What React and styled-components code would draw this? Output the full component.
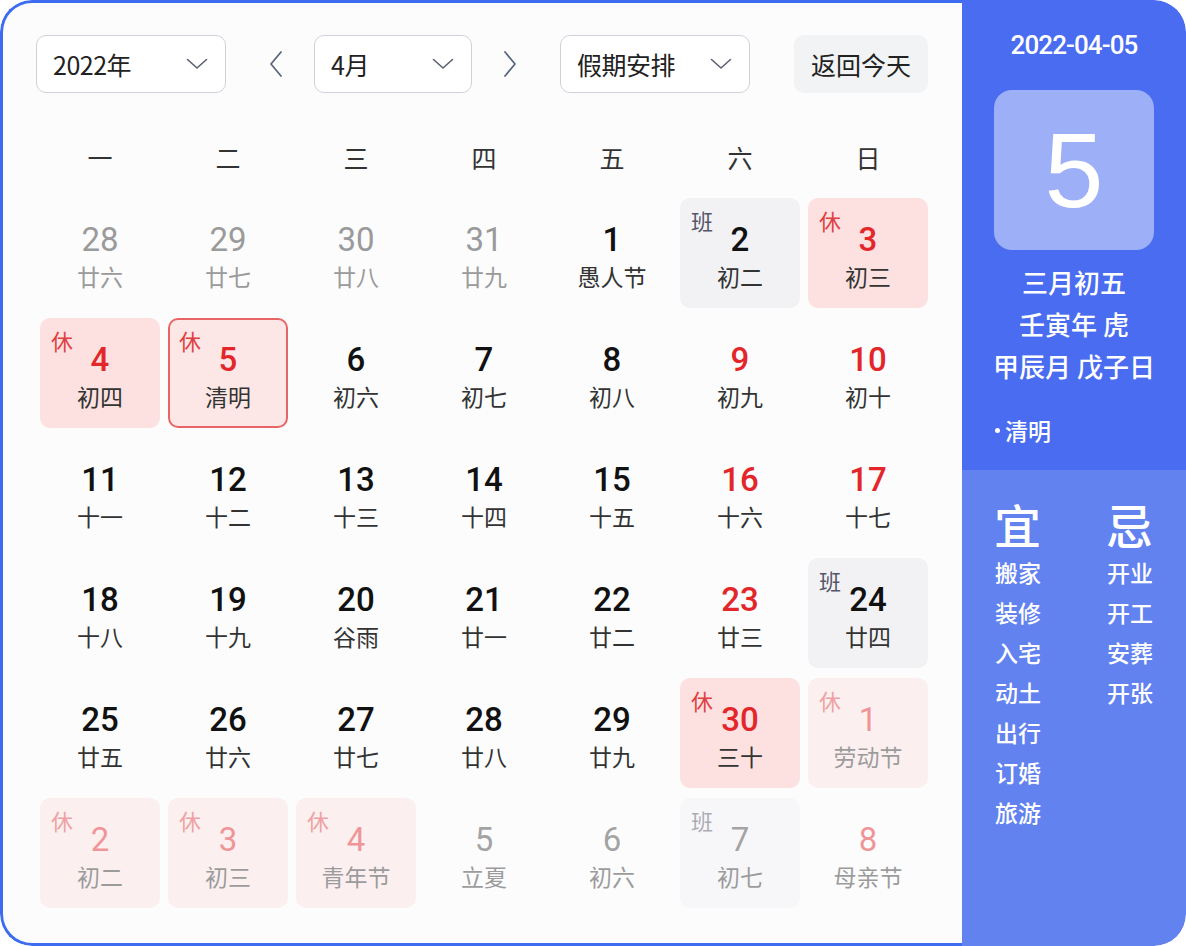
import React from "react";
import styled, { createGlobalStyle, css } from "styled-components";

const GlobalStyle = createGlobalStyle`
  html, body {
    margin: 0;
    padding: 0;
    background: #ffffff;
  }
  body {
    font-family: "Noto Sans CJK SC", "Noto Sans", sans-serif;
  }
`;

const NUM_FONT = `"Roboto", "Liberation Sans", "Noto Sans CJK SC", sans-serif`;

const weekdays = ["一", "二", "三", "四", "五", "六", "日"];

const days = [
  { n: 28, l: "廿六", muted: "prev" },
  { n: 29, l: "廿七", muted: "prev" },
  { n: 30, l: "廿八", muted: "prev" },
  { n: 31, l: "廿九", muted: "prev" },
  { n: 1, l: "愚人节" },
  { n: 2, l: "初二", kind: "work" },
  { n: 3, l: "初三", kind: "rest", red: true },

  { n: 4, l: "初四", kind: "rest", red: true },
  { n: 5, l: "清明", kind: "rest", red: true, selected: true },
  { n: 6, l: "初六" },
  { n: 7, l: "初七" },
  { n: 8, l: "初八" },
  { n: 9, l: "初九", red: true },
  { n: 10, l: "初十", red: true },

  { n: 11, l: "十一" },
  { n: 12, l: "十二" },
  { n: 13, l: "十三" },
  { n: 14, l: "十四" },
  { n: 15, l: "十五" },
  { n: 16, l: "十六", red: true },
  { n: 17, l: "十七", red: true },

  { n: 18, l: "十八" },
  { n: 19, l: "十九" },
  { n: 20, l: "谷雨" },
  { n: 21, l: "廿一" },
  { n: 22, l: "廿二" },
  { n: 23, l: "廿三", red: true },
  { n: 24, l: "廿四", kind: "work" },

  { n: 25, l: "廿五" },
  { n: 26, l: "廿六" },
  { n: 27, l: "廿七" },
  { n: 28, l: "廿八" },
  { n: 29, l: "廿九" },
  { n: 30, l: "三十", kind: "rest", red: true },
  { n: 1, l: "劳动节", kind: "rest", red: true, muted: "next" },

  { n: 2, l: "初二", kind: "rest", red: true, muted: "next" },
  { n: 3, l: "初三", kind: "rest", red: true, muted: "next" },
  { n: 4, l: "青年节", kind: "rest", red: true, muted: "next" },
  { n: 5, l: "立夏", muted: "next" },
  { n: 6, l: "初六", muted: "next" },
  { n: 7, l: "初七", kind: "work", muted: "next" },
  { n: 8, l: "母亲节", red: true, muted: "next" },
];

const goodThings = ["搬家", "装修", "入宅", "动土", "出行", "订婚", "旅游"];
const badThings = ["开业", "开工", "安葬", "开张"];

const Chevron = () => (
  <svg width="22" height="12" viewBox="0 0 22 12" fill="none">
    <path d="M1.5 1.5 L11 10 L20.5 1.5" stroke="#5b6170" strokeWidth="1.6" strokeLinecap="round" strokeLinejoin="round" />
  </svg>
);

const Arrow = ({ dir }) => (
  <svg width="14" height="28" viewBox="0 0 14 28" fill="none">
    <path
      d={dir === "left" ? "M12 2 L2 14 L12 26" : "M2 2 L12 14 L2 26"}
      stroke="#5a6780"
      strokeWidth="1.8"
      strokeLinecap="round"
      strokeLinejoin="round"
    />
  </svg>
);

const App = () => {
  return (
    <>
      <GlobalStyle />
      <Frame>
        <Main>
          <Toolbar>
            <Select $w={190}>
              <span>2022年</span>
              <Chevron />
            </Select>
            <MonthGroup>
              <ArrowBtn>
                <Arrow dir="left" />
              </ArrowBtn>
              <Select $w={158}>
                <span>4月</span>
                <Chevron />
              </Select>
              <ArrowBtn>
                <Arrow dir="right" />
              </ArrowBtn>
            </MonthGroup>
            <Select $w={190}>
              <span>假期安排</span>
              <Chevron />
            </Select>
            <TodayButton>返回今天</TodayButton>
          </Toolbar>

          <WeekRow>
            {weekdays.map((w) => (
              <WeekDay key={w}>{w}</WeekDay>
            ))}
          </WeekRow>

          <Grid>
            {days.map((d, i) => (
              <Cell key={i} $kind={d.kind} $muted={d.muted} $selected={d.selected}>
                {d.kind && (
                  <Badge $kind={d.kind} $selected={d.selected}>
                    {d.kind === "rest" ? "休" : "班"}
                  </Badge>
                )}
                <DayNum $red={d.red} $muted={d.muted}>
                  {d.n}
                </DayNum>
                <Lunar $muted={d.muted}>{d.l}</Lunar>
              </Cell>
            ))}
          </Grid>
        </Main>

        <Side>
          <SideTop>
            <DateLine>2022-04-05</DateLine>
            <BigDay>5</BigDay>
            <LunarInfo>
              <div>三月初五</div>
              <div>壬寅年 虎</div>
              <div>甲辰月 戊子日</div>
            </LunarInfo>
            <Festival>
              <Dot />
              清明
            </Festival>
          </SideTop>
          <SideBottom>
            <Column>
              <Heading>宜</Heading>
              {goodThings.map((t) => (
                <Item key={t}>{t}</Item>
              ))}
            </Column>
            <Column>
              <Heading>忌</Heading>
              {badThings.map((t) => (
                <Item key={t}>{t}</Item>
              ))}
            </Column>
          </SideBottom>
        </Side>
      </Frame>
    </>
  );
};

export default App;

const Frame = styled.div`
  width: 1186px;
  height: 946px;
  display: flex;
  border-radius: 32px;
  overflow: hidden;
  background: #ffffff;
`;

const Main = styled.div`
  flex: 1;
  box-sizing: border-box;
  border: 3px solid #3d6cf0;
  border-right: none;
  border-radius: 32px 0 0 32px;
  background: #fcfcfd;
  padding: 32px 34px 0 37px;
`;

const Toolbar = styled.div`
  display: flex;
  align-items: center;
  margin-left: -4px;
  gap: 43px;
`;

const MonthGroup = styled.div`
  display: flex;
  align-items: center;
  gap: 31px;
`;

const Select = styled.div`
  width: ${(p) => p.$w}px;
  height: 58px;
  box-sizing: border-box;
  border: 1px solid #cfd2da;
  border-radius: 10px;
  background: #ffffff;
  display: flex;
  align-items: center;
  justify-content: space-between;
  padding: 0 17px 0 16px;
  font-size: 25px;
  color: #222;
  span {
    letter-spacing: -0.5px;
  }
`;

const ArrowBtn = styled.div`
  width: 14px;
  height: 28px;
  display: flex;
  align-items: center;
  justify-content: center;
`;

const TodayButton = styled.div`
  margin-left: auto;
  width: 134px;
  height: 58px;
  border-radius: 10px;
  background: #f2f3f5;
  display: flex;
  align-items: center;
  justify-content: center;
  font-size: 25px;
  color: #222;
`;

const WeekRow = styled.div`
  display: grid;
  grid-template-columns: repeat(7, 120px);
  column-gap: 8px;
  margin-top: 44px;
  height: 40px;
`;

const WeekDay = styled.div`
  display: flex;
  align-items: center;
  justify-content: center;
  font-size: 25px;
  color: #333;
`;

const Grid = styled.div`
  display: grid;
  grid-template-columns: repeat(7, 120px);
  grid-auto-rows: 110px;
  column-gap: 8px;
  row-gap: 10px;
  margin-top: 21px;
`;

const Cell = styled.div`
  position: relative;
  box-sizing: border-box;
  border-radius: 10px;
  display: flex;
  flex-direction: column;
  align-items: center;
  padding-top: 22px;
  ${(p) =>
    p.$kind === "rest" &&
    css`
      background: #fde1e1;
    `}
  ${(p) =>
    p.$kind === "work" &&
    css`
      background: #f2f2f5;
    `}
  ${(p) =>
    p.$selected &&
    css`
      background: #fde6e6;
      border: 2px solid #e86565;
      padding-top: 20px;
    `}
  ${(p) =>
    p.$muted === "next" &&
    css`
      opacity: 0.48;
    `}
`;

const Badge = styled.span`
  position: absolute;
  top: ${(p) => (p.$selected ? 6 : 8)}px;
  left: ${(p) => (p.$selected ? 9 : 11)}px;
  font-size: 22px;
  line-height: 28px;
  color: ${(p) => (p.$kind === "rest" ? "#e0403f" : "#55556a")};
`;

const DayNum = styled.div`
  font-family: ${NUM_FONT};
  font-size: 33px;
  line-height: 40px;
  font-weight: ${(p) => (p.$muted ? 400 : 500)};
  color: ${(p) => (p.$red ? "#e3262a" : p.$muted === "prev" ? "#9a9a9a" : p.$muted ? "#444" : "#111")};
`;

const Lunar = styled.div`
  margin-top: 1px;
  font-size: 23px;
  line-height: 30px;
  color: ${(p) => (p.$muted === "prev" ? "#9a9a9a" : "#333")};
`;

const Side = styled.div`
  width: 224px;
  flex-shrink: 0;
  display: flex;
  flex-direction: column;
  color: #ffffff;
  border-radius: 0 32px 32px 0;
  overflow: hidden;
`;

const SideTop = styled.div`
  height: 470px;
  box-sizing: border-box;
  background: #4a6cf0;
  padding: 30px 0 0 31px;
  display: flex;
  flex-direction: column;
`;

const DateLine = styled.div`
  margin-left: -31px;
  text-align: center;
  font-family: ${NUM_FONT};
  font-size: 26px;
  line-height: 30px;
  font-weight: 500;
  letter-spacing: -0.9px;
`;

const BigDay = styled.div`
  margin: 30px 0 0 1px;
  width: 160px;
  height: 160px;
  border-radius: 18px;
  background: rgba(255, 255, 255, 0.46);
  display: flex;
  align-items: center;
  justify-content: center;
  font-family: "Liberation Sans", sans-serif;
  font-size: 106px;
  line-height: 1;
`;

const LunarInfo = styled.div`
  margin: 11px 0 0 -31px;
  text-align: center;
  font-size: 26px;
  line-height: 42px;
  font-weight: 500;
`;

const Festival = styled.div`
  margin-top: 28px;
  display: flex;
  align-items: center;
  font-size: 23px;
  line-height: 30px;
  font-weight: 500;
`;

const Dot = styled.span`
  width: 5px;
  height: 5px;
  border-radius: 50%;
  background: #ffffff;
  margin: 0 5px 0 2px;
`;

const SideBottom = styled.div`
  flex: 1;
  background: #6282f0;
  padding: 26px 0 0 33px;
  display: flex;
`;

const Column = styled.div`
  width: 112px;
  flex-shrink: 0;
  display: flex;
  flex-direction: column;
`;

const Heading = styled.div`
  font-size: 47px;
  line-height: 56px;
  font-weight: 500;
  margin-left: -1px;
`;

const Item = styled.div`
  font-size: 23px;
  line-height: 40px;
  font-weight: 500;
`;
